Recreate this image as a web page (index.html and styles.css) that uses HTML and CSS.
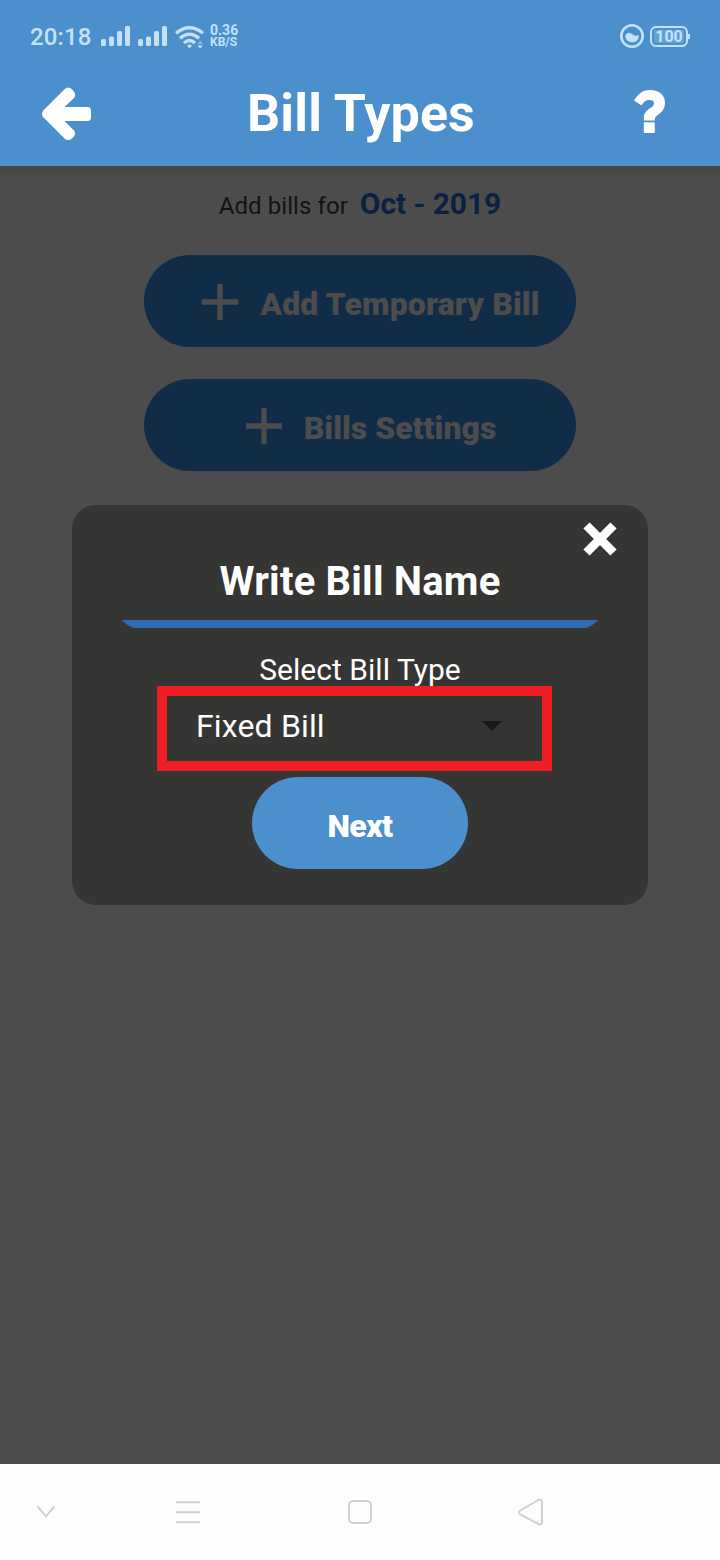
FILE: index.html
```
<!DOCTYPE html>
<html lang="en">
<head>
<meta charset="utf-8">
<title>Bill Types</title>
<link rel="stylesheet" href="styles.css">
</head>
<body>
<div class="screen">
  <header class="header">
    <div class="status">
      <span class="clock">20:18</span>
      <svg class="signals" width="66" height="20" viewBox="0 0 66 20" fill="currentColor"><rect x="0" y="13" width="5" height="7" rx="1.5"/><rect x="8" y="10.500" width="5" height="9.500" rx="1.500"/><rect x="16" y="5" width="5" height="15" rx="1.500"/><rect x="24" y="0" width="5" height="20" rx="1.500"/><rect x="37" y="13" width="5" height="7" rx="1.500"/><rect x="45" y="10.500" width="5" height="9.500" rx="1.500"/><rect x="53" y="5" width="5" height="15" rx="1.500"/><rect x="61" y="0" width="5" height="20" rx="1.500"/></svg>
      <svg class="wifi" width="29" height="23" viewBox="0 0 29 23"><g fill="none" stroke="currentColor" stroke-width="3.300"><path d="M1 7.300Q14.500-3.700 28 7.300"/><path d="M5 12.300Q14.500 4 24 12.300"/><path d="M9 17Q14.500 12 20 17"/></g><path d="M12 19.500Q14.500 17.500 17 19.500L14.500 22.500ZM22.500 19.500H28L25.200 22.500Z" fill="currentColor"/><path d="M22.500 18L25.200 14.500 28 18Z" fill="#83b7e4"/></svg>
      <span class="speed"><span class="rate">0.36</span><span>KB/S</span></span>
      <svg class="saver" width="24" height="24" viewBox="0 0 24 24"><circle cx="12" cy="12" r="10.700" fill="none" stroke="currentColor" stroke-width="2.600"/><path d="M5.500 11C7 8 10.500 8.500 13 10.500C15 12 17 12 18.700 10.800C19.500 16 15.500 18.700 12 18.300C7.500 18 5 15 5.500 11Z" fill="currentColor"/></svg>
      <span class="battery">100</span>
    </div>
    <div class="appbar">
      <svg class="back" width="50" height="54" viewBox="0 0 50 54"><path d="M1.300 23.500L22.500 2.200Q26.500-1 30 2.300L31.500 4Q34.500 7 32 11L22.500 20H45.500Q49 20 49 23.500V30.500Q49 34 45.500 34H22.500L32 43.500Q34.500 47 31.500 50L30 51.500Q26.500 54.500 22.500 51.500L1.300 30.200Q-1.300 27 1.300 23.500Z" fill="#fff"/></svg>
      <h1 class="title">Bill Types</h1>
      <svg class="help" width="32" height="44" viewBox="0 0 32 44"><path d="M0 10.500C4.500 3 9.500 0 16 0C25 0 31 5 31 12.800C31 18.500 28 22 24.500 24.500C21 27 20.800 28 20.800 30.500H9.800V27.500C9.800 22.500 13 20.200 16.500 18C19.500 16 20 15 20 13C20 11 18.300 10 15.500 10C12 10 10 11.500 7.600 15.500Z" fill="#fff"/><rect x="9.800" y="32.200" width="11" height="10.900" rx="1" fill="#fff"/></svg>
    </div>
  </header>
  <main class="main">
    <div class="period"><span class="label">Add bills for</span><strong class="month">Oct - 2019</strong></div>
    <div class="actions">
      <div class="action"><svg class="plus" width="36" height="36" viewBox="0 0 36 36"><path d="M18 0V36M0 18H36" stroke="currentColor" stroke-width="5.300"/></svg><span class="caption temp">Add Temporary Bill</span></div>
      <div class="action"><svg class="plus" width="36" height="36" viewBox="0 0 36 36"><path d="M18 0V36M0 18H36" stroke="currentColor" stroke-width="5.300"/></svg><span class="caption">Bills Settings</span></div>
    </div>
    <section class="dialog">
      <svg class="close" width="34" height="34" viewBox="0 0 34 34"><path d="M3.500 3.500L30.500 30.500M30.500 3.500L3.500 30.500" stroke="#fff" stroke-width="8.800"/></svg>
      <h2 class="name">Write Bill Name</h2>
      <svg class="underline" width="480" height="8" viewBox="0 0 480 8"><path d="M1.500 0H478.500Q473 5.500 466 8H14Q7 5.500 1.500 0Z" fill="#326bb5"/></svg>
      <p class="prompt">Select Bill Type</p>
      <div class="select"><span class="value">Fixed Bill</span><svg class="caret" width="20" height="10" viewBox="0 0 20 10"><path d="M0 0H20L10 10Z" fill="#181817"/></svg></div>
      <div class="next">Next</div>
    </section>
  </main>
  <nav class="nav">
    <svg class="down" width="18" height="12" viewBox="0 0 18 12"><path d="M1 1L9 10.300 17 1"/></svg>
    <svg class="menu" width="24" height="24" viewBox="0 0 24 24"><path d="M0 2.300H24M0 12.300H24M0 22.300H24"/></svg>
    <svg class="home" width="24" height="24" viewBox="0 0 24 24"><rect x="1" y="1" width="22" height="22" rx="4.500"/></svg>
    <svg class="return" width="26" height="28" viewBox="0 0 26 28"><path d="M2.200 12.500L20.500 2Q24 .5 24 4V24Q24 27.500 20.500 26L2.200 16.500Q0 14.500 2.200 12.500Z"/></svg>
  </nav>
</div>
</body>
</html>
```
FILE: styles.css
```
* { box-sizing: border-box; }
body { margin: 0; font-family: Roboto, sans-serif; }
h1, h2, p { margin: 0; }
svg { display: block; flex: none; }
.screen { width: 720px; height: 1560px; display: flex; flex-direction: column; overflow: hidden; white-space: nowrap; }

.header { height: 166px; background: #4c8fcd; }
.status { height: 72px; padding: 0 30px; display: flex; align-items: center; color: #c5e1f7; }
.clock { width: 71px; font-size: 24px; line-height: 30px; padding-top: 2px; font-weight: 500; letter-spacing: .1px; }
.signals { margin-right: 8px; }
.wifi { margin: 2px 6px 0 0; }
.speed { display: flex; flex-direction: column; font-size: 12px; line-height: 12px; font-weight: 700; }
.rate { font-size: 14px; }
.saver { margin-left: auto; }
.battery { position: relative; width: 38px; height: 21px; margin: 0 2px 0 6px; border: 2px solid currentColor; border-radius: 6px; font-size: 16px; line-height: 17px; font-weight: 700; text-align: center; background: #62a0d8; box-shadow: inset 0 0 0 2px #4c8fcd; }
.battery::after { content: ""; position: absolute; right: -4px; top: 6px; width: 2px; height: 5px; background: currentColor; }
.appbar { height: 94px; padding: 0 54px 12px 42px; display: flex; align-items: center; justify-content: space-between; }
.back { margin-top: 2px; }
.help { margin-top: -3px; }
.title { margin: 2px 4px 0 0; color: #fff; font-size: 52px; line-height: 60px; font-weight: 700; letter-spacing: .15px; }

.main { position: relative; height: 1298px; padding-top: 20px; background: linear-gradient(#464646, #4c4c4c 14px); }
.period { height: 36px; display: flex; justify-content: center; align-items: baseline; gap: 12px; }
.label { font-size: 24px; color: #121212; letter-spacing: .07px; }
.month { font-size: 30px; line-height: 36px; color: #0b2143; letter-spacing: -.07px; }
.actions { margin-top: 33px; display: flex; flex-direction: column; align-items: center; gap: 32px; }
.action { width: 432px; height: 92px; padding: 2px 0 0 22px; border-radius: 46px; background: #102c47; color: #4c4c4c; display: flex; align-items: center; justify-content: center; gap: 22px; }
.caption { font-size: 32px; line-height: 38px; padding-top: 4px; font-weight: 900; }
.temp { letter-spacing: .12px; }

.dialog { position: absolute; left: 72px; top: 339px; width: 576px; height: 400px; border-radius: 24px; background: #353533; color: #fff; display: flex; flex-direction: column; align-items: center; }
.close { align-self: flex-end; margin: 17px 31px 0 0; }
.name { margin-top: 2px; font-size: 40px; line-height: 48px; font-weight: 700; letter-spacing: .2px; }
.underline { margin-top: 14px; }
.prompt { margin-top: 24px; height: 34px; font-size: 30px; line-height: 36px; letter-spacing: .03px; }
.select { position: relative; width: 395px; height: 85px; margin-right: 11px; padding: 0 40px 6px 29px; border: 10px solid #ef1d25; display: flex; align-items: center; justify-content: space-between; }
.value { font-size: 32px; line-height: 38px; letter-spacing: .15px; }
.next { width: 216px; height: 92px; margin-top: 6px; padding-top: 6px; border-radius: 46px; background: #4c8fcd; display: flex; align-items: center; justify-content: center; font-size: 32px; font-weight: 900; letter-spacing: -.6px; }

.nav { height: 96px; background: #fcfefd; padding-left: 37px; display: flex; align-items: center; fill: none; stroke: #cfd1d0; stroke-width: 2; }
.down { stroke-linecap: round; }
.menu { margin-left: 121px; }
.home { margin-left: 148px; }
.return { margin-left: 146px; }
```
